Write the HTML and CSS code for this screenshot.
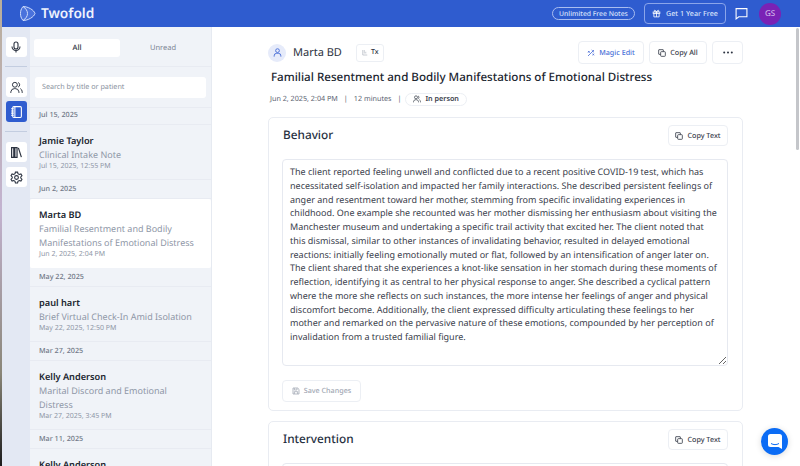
FILE: index.html
```html
<!DOCTYPE html>
<html lang="en">
<head>
    <meta charset="UTF-8">
    <meta name="viewport" content="width=device-width, initial-scale=1.0">
    <title>Twofold</title>
    <link rel="stylesheet" href="styles.css">
</head>
<body>

<div class="window">
    <header class="topbar">
        <div class="brand">
            <svg class="brand-mark" width="16" height="17" viewBox="0 0 16 17" fill="none" stroke="#cfdcfb" stroke-width="1">
                <path d="M3 1.500c5 0 11 3.500 12 7-1 3.500-7 7-12 7C1 13 .5 11 .5 8.500S1 4 3 1.500z" fill="#4a72dc"/>
                <path d="M3 1.500c3 2 4.500 4.500 4.500 7S6 13.500 3 15.500"/>
            </svg>
            <span class="brand-name">Twofold</span>
        </div>
        <div class="topbar-right">
            <span class="pill">Unlimited Free Notes</span>
            <button class="gift-btn">
                <svg width="9" height="9" viewBox="0 0 24 24" fill="none" stroke="#fff" stroke-width="2.200"><rect x="3" y="8" width="18" height="4"/><path d="M5 12v9h14v-9M12 8v13M12 8C10 3 6 2 6 5s3 3 6 3zM12 8c2-5 6-6 6-3s-3 3-6 3z"/></svg>
                Get 1 Year Free
            </button>
            <svg class="chat-icon" width="13" height="13" viewBox="0 0 24 24" fill="none" stroke="#fff" stroke-width="2"><path d="M2 3h20v15H7l-5 4z"/></svg>
            <span class="user-badge">GS</span>
        </div>
    </header>

    <div class="layout">
        <nav class="rail">
            <a class="rail-btn">
                <svg width="12" height="12" viewBox="0 0 24 24" fill="none" stroke="#2b3240" stroke-width="2.200"><rect x="8" y="2" width="8" height="14" rx="4"/><path d="M4 11a8 8 0 0 0 16 0M12 19v4"/></svg>
            </a>
            <div class="rail-line"></div>
            <a class="rail-btn rail-people">
                <svg width="13" height="13" viewBox="0 0 24 24" fill="none" stroke="#2b3240" stroke-width="1.800"><circle cx="9" cy="7" r="4.500"/><path d="M1.500 22v-2a7 7 0 0 1 7-6h1a7 7 0 0 1 7 6v2M15 2.800a4.500 4.500 0 0 1 0 8.400M19 14a7 7 0 0 1 3.500 6v2"/></svg>
            </a>
            <a class="rail-btn rail-active">
                <svg width="13" height="14" viewBox="0 0 24 24" fill="none" stroke="#fff" stroke-width="2"><rect x="5" y="2" width="16" height="20" rx="2"/><path d="M9 2v20M2 6h5M2 10h5M2 14h5M2 18h5"/></svg>
            </a>
            <div class="rail-line"></div>
            <a class="rail-btn">
                <svg width="13" height="13" viewBox="0 0 24 24" fill="none" stroke="#2b3240" stroke-width="2.200"><path d="M3 3h4v18H3zM9 3h4v18H9zM15.500 3.500l5.500 17"/></svg>
            </a>
            <a class="rail-btn rail-gear">
                <svg width="13" height="13" viewBox="0 0 24 24" fill="none" stroke="#2b3240" stroke-width="2"><circle cx="12" cy="12" r="3.500"/><path d="M10 2h4l.7 3 2.400 1.300 3-.9 2 3.400-2.200 2.200v2l2.200 2.200-2 3.400-3-.9-2.400 1.300-.7 3h-4l-.7-3-2.400-1.300-3 .9-2-3.400L4.100 13v-2L1.900 8.800l2-3.400 3 .9L9.300 5z"/></svg>
            </a>
        </nav>

        <aside class="notes">
            <div class="tabs">
                <span class="tab tab-on">All</span>
                <span class="tab">Unread</span>
            </div>
            <div class="search-wrap">
                <div class="search">Search by title or patient</div>
            </div>

            <div class="day">Jul 15, 2025</div>
            <div class="note">
                <div class="note-name">Jamie Taylor</div>
                <div class="note-title">Clinical Intake Note</div>
                <div class="note-time">Jul 15, 2025, 12:55 PM</div>
            </div>

            <div class="day">Jun 2, 2025</div>
            <div class="note note-on">
                <div class="note-name">Marta BD</div>
                <div class="note-title">Familial Resentment and Bodily Manifestations of Emotional Distress</div>
                <div class="note-time">Jun 2, 2025, 2:04 PM</div>
            </div>

            <div class="day">May 22, 2025</div>
            <div class="note">
                <div class="note-name">paul hart</div>
                <div class="note-title">Brief Virtual Check-In Amid Isolation</div>
                <div class="note-time">May 22, 2025, 12:50 PM</div>
            </div>

            <div class="day">Mar 27, 2025</div>
            <div class="note">
                <div class="note-name">Kelly Anderson</div>
                <div class="note-title">Marital Discord and Emotional Distress</div>
                <div class="note-time">Mar 27, 2025, 3:45 PM</div>
            </div>

            <div class="day">Mar 11, 2025</div>
            <div class="note">
                <div class="note-name">Kelly Anderson</div>
            </div>
        </aside>

        <main class="content">
            <div class="patient-row">
                <span class="patient-icon">
                    <svg width="9" height="9" viewBox="0 0 24 24" fill="none" stroke="#4a6fd8" stroke-width="2.500"><circle cx="12" cy="7" r="5"/><path d="M3 23v-2a7 7 0 0 1 7-7h4a7 7 0 0 1 7 7v2"/></svg>
                </span>
                <span class="patient-name">Marta BD</span>
                <span class="tx-tag">
                    <svg width="6" height="7" viewBox="0 0 24 24" fill="none" stroke="#a7adb8" stroke-width="2.500"><path d="M3 2v20h18M9 2v14M15 9v7"/></svg>
                    Tx
                </span>
                <div class="actions">
                    <button class="btn btn-magic">
                        <svg width="8" height="8" viewBox="0 0 24 24" fill="none" stroke="#4a6fd8" stroke-width="2.500"><path d="M3 21L21 3M14 3l7 7M3 6l5 5M8 6l-5 5M17 14l4 5M21 14l-4 5"/></svg>
                        Magic Edit
                    </button>
                    <button class="btn btn-all">
                        <svg class="copy" width="8" height="8" viewBox="0 0 24 24" fill="none" stroke="#3a404c" stroke-width="2.500"><rect x="8" y="8" width="14" height="14" rx="2"/><path d="M16 8V3a1 1 0 0 0-1-1H3a1 1 0 0 0-1 1v12a1 1 0 0 0 1 1h5"/></svg>
                        Copy All
                    </button>
                    <button class="btn btn-more">
                        <svg width="10" height="3" viewBox="0 0 10 3" fill="#2b3240"><circle cx="1.200" cy="1.500" r="1"/><circle cx="5" cy="1.500" r="1"/><circle cx="8.800" cy="1.500" r="1"/></svg>
                    </button>
                </div>
            </div>

            <h1 class="note-heading">Familial Resentment and Bodily Manifestations of Emotional Distress</h1>

            <div class="meta">
                <span>Jun 2, 2025, 2:04 PM</span>
                <span class="sep">|</span>
                <span>12 minutes</span>
                <span class="sep">|</span>
                <span class="visit-tag">
                    <svg width="8" height="8" viewBox="0 0 24 24" fill="none" stroke="#3a404c" stroke-width="2.200"><circle cx="9" cy="7" r="4.500"/><path d="M1.500 22v-2a7 7 0 0 1 7-6h1a7 7 0 0 1 7 6v2M15 2.800a4.500 4.500 0 0 1 0 8.400M19 14a7 7 0 0 1 3.500 6v2"/></svg>
                    In person
                </span>
            </div>

            <section class="card">
                <div class="card-head">
                    <h2>Behavior</h2>
                    <button class="btn btn-copy">
                        <svg width="8" height="8" viewBox="0 0 24 24" fill="none" stroke="#3a404c" stroke-width="2.500"><rect x="8" y="8" width="14" height="14" rx="2"/><path d="M16 8V3a1 1 0 0 0-1-1H3a1 1 0 0 0-1 1v12a1 1 0 0 0 1 1h5"/></svg>
                        Copy Text
                    </button>
                </div>
                <textarea class="note-text" spellcheck="false">The client reported feeling unwell and conflicted due to a recent positive COVID-19 test, which has necessitated self-isolation and impacted her family interactions. She described persistent feelings of anger and resentment toward her mother, stemming from specific invalidating experiences in childhood. One example she recounted was her mother dismissing her enthusiasm about visiting the Manchester museum and undertaking a specific trail activity that excited her. The client noted that this dismissal, similar to other instances of invalidating behavior, resulted in delayed emotional reactions: initially feeling emotionally muted or flat, followed by an intensification of anger later on. The client shared that she experiences a knot-like sensation in her stomach during these moments of reflection, identifying it as central to her physical response to anger. She described a cyclical pattern where the more she reflects on such instances, the more intense her feelings of anger and physical discomfort become. Additionally, the client expressed difficulty articulating these feelings to her mother and remarked on the pervasive nature of these emotions, compounded by her perception of invalidation from a trusted familial figure.</textarea>
                <button class="btn btn-save">
                    <svg width="8" height="8" viewBox="0 0 24 24" fill="none" stroke="#a7adb8" stroke-width="2.500"><path d="M3 3h14l4 4v14H3zM7 3v6h8V3M7 21v-7h10v7"/></svg>
                    Save Changes
                </button>
            </section>

            <section class="card">
                <div class="card-head">
                    <h2>Intervention</h2>
                    <button class="btn btn-copy">
                        <svg width="8" height="8" viewBox="0 0 24 24" fill="none" stroke="#3a404c" stroke-width="2.500"><rect x="8" y="8" width="14" height="14" rx="2"/><path d="M16 8V3a1 1 0 0 0-1-1H3a1 1 0 0 0-1 1v12a1 1 0 0 0 1 1h5"/></svg>
                        Copy Text
                    </button>
                </div>
                <div class="note-text note-text-next"></div>
            </section>

            <div class="scroll-thumb"></div>
        </main>
    </div>

    <button class="chat-fab" aria-label="Chat">
        <svg width="14" height="15" viewBox="0 0 14 15"><path d="M2.500 0h9A2.500 2.500 0 0 1 14 2.500V15l-3.500-2h-8A2.500 2.500 0 0 1 0 10.500v-8A2.500 2.500 0 0 1 2.500 0z" fill="#fff"/><path d="M3 9.500c2.500 1.500 5.500 1.500 8 0" fill="none" stroke="#0b6cf5" stroke-width="1"/></svg>
    </button>
</div>

</body>
</html>
```

FILE: styles.css
```css
* {
    box-sizing: border-box;
    text-rendering: geometricPrecision;
}

html,
body {
    height: 100%;
    margin: 0;
    overflow: hidden;
}

body {
    font-family: "Noto Sans", "Open Sans", sans-serif;
    color: #2b3240;
    padding-left: 2px;
    background: linear-gradient(#b9ae9a, #c3b3d0 45%, #8a8678 80%, #1c1c1c);
}

button {
    font-family: inherit;
    cursor: pointer;
}

.window {
    position: relative;
    height: 100%;
    display: flex;
    flex-direction: column;
    background: #fff;
}

/* top bar */
.topbar {
    height: 27px;
    flex: none;
    display: flex;
    align-items: center;
    justify-content: space-between;
    padding: 0 19px 0 18px;
    background-color: #2f5ccf;
    color: #fff;
}

.brand {
    display: flex;
    align-items: center;
    gap: 5px;
}

.brand-name {
    font-size: 13.700px;
    font-weight: 600;
    color: #eef2fd;
}

.topbar-right {
    display: flex;
    align-items: center;
}

.pill {
    width: 83px;
    font-size: 6.800px;
    font-weight: 500;
    height: 13px;
    line-height: 11px;
    text-align: center;
    border: 1px solid #a9bdf0;
    border-radius: 7px;
    color: #dbe4fb;
    margin-right: 9px;
}

.gift-btn {
    display: flex;
    align-items: center;
    gap: 5px;
    width: 82px;
    height: 21px;
    padding: 0 0 0 7px;
    font-size: 7.200px;
    font-weight: 500;
    white-space: nowrap;
    color: #dbe4fb;
    background: none;
    border: 1px solid #8ba5ea;
    border-radius: 4px;
    margin-right: 9px;
}

.chat-icon {
    margin-right: 11px;
}

.user-badge {
    width: 22px;
    height: 22px;
    border-radius: 50%;
    background-color: #7a22b5;
    color: #d9c3ee;
    font-size: 8px;
    line-height: 22px;
    text-align: center;
}

.layout {
    flex: 1;
    display: flex;
    min-height: 0;
}

/* icon rail */
.rail {
    width: 28px;
    flex: none;
    display: flex;
    flex-direction: column;
    align-items: center;
    padding-top: 10px;
    background-color: #e3e8f3;
}

.rail-btn {
    width: 21px;
    height: 20px;
    display: flex;
    align-items: center;
    justify-content: center;
    background-color: #fff;
    border-radius: 3px;
}

.rail-line {
    width: 22px;
    height: 1px;
    margin: 9px 0 10px;
    background-color: #c3cde0;
}

.rail-people {
    margin-bottom: 4px;
}

.rail-active {
    height: 21px;
    background-color: #2f5ccf;
}

.rail-gear {
    margin-top: 5px;
}

/* note list */
.notes {
    width: 182px;
    flex: none;
    overflow: hidden;
    background-color: #f0f3f8;
    border-right: 1px solid #e6eaf1;
}

.tabs {
    display: flex;
    padding: 12px 4px 9px;
    border-bottom: 1px solid #e8ebf2;
    font-size: 7.500px;
}

.tab {
    width: 86px;
    height: 18px;
    line-height: 18px;
    text-align: center;
    color: #7c8493;
}

.tab-on {
    background-color: #fff;
    color: #2b3240;
    font-weight: 500;
    border-radius: 3px;
}

.search-wrap {
    padding: 10px 5px 9px;
    border-bottom: 1px solid #e8ebf2;
}

.search {
    height: 21px;
    line-height: 21px;
    padding-left: 7px;
    background-color: #fff;
    border-radius: 3px;
    font-size: 7.200px;
    color: #8a92a0;
}

.day {
    height: 19px;
    line-height: 18px;
    padding-left: 9px;
    font-size: 7.200px;
    font-weight: 500;
    color: #6f7786;
    border-bottom: 1px solid #e8ebf2;
}

.search-wrap + .day {
    height: 17px;
    line-height: 15px;
}

.note {
    padding: 9px 9px 7px;
    border-bottom: 1px solid #e8ebf2;
}

.note-on {
    background-color: #fff;
    border-bottom-color: #fff;
    border-radius: 2px;
}

.note-name {
    font-size: 9.200px;
    line-height: 14px;
    font-weight: 600;
    color: #20252f;
}

.note-title {
    font-size: 9px;
    line-height: 14px;
    color: #8f97a7;
}

.note-time {
    font-size: 7px;
    line-height: 10px;
    color: #8f97a7;
}

/* main column */
.content {
    position: relative;
    flex: 1;
    min-width: 0;
    overflow: hidden;
    padding: 14px 57px 0 56px;
}

.patient-row {
    display: flex;
    align-items: center;
    height: 23px;
}

.patient-icon {
    width: 18px;
    height: 18px;
    display: flex;
    align-items: center;
    justify-content: center;
    border-radius: 50%;
    background-color: #e6ebfa;
    margin-right: 7px;
}

.patient-name {
    font-size: 11px;
    color: #2b3240;
    margin-right: 14px;
}

.tx-tag {
    display: flex;
    align-items: center;
    gap: 3px;
    height: 18px;
    padding: 0 5px;
    font-size: 7px;
    font-weight: 500;
    border: 1px solid #eceff4;
    border-radius: 3px;
}

.actions {
    margin-left: auto;
    display: flex;
    gap: 5px;
}

.btn {
    display: flex;
    align-items: center;
    justify-content: center;
    gap: 4px;
    height: 23px;
    padding: 0;
    font-size: 7.200px;
    font-weight: 500;
    white-space: nowrap;
    color: #3a404c;
    background-color: #fff;
    border: 1px solid #eceff4;
    border-radius: 4px;
}

.btn-magic {
    color: #4a6fd8;
    width: 66px;
}

.btn-all {
    width: 58px;
}

.btn-more {
    width: 31px;
}

.btn-copy {
    width: 60px;
    height: 21px;
}

.btn-save {
    width: 79px;
    height: 22px;
    color: #a1a7b3;
    margin-top: 14px;
}

.note-heading {
    margin: 4px 0 0 3px;
    font-size: 11.600px;
    line-height: 20px;
    font-weight: 500;
    white-space: nowrap;
    color: #20252f;
}

.meta {
    display: flex;
    align-items: center;
    height: 14px;
    margin-top: 4px;
    margin-left: 2px;
    font-size: 7.200px;
    color: #5b6371;
}

.sep {
    margin: 0 6px;
}

.visit-tag {
    display: flex;
    align-items: center;
    gap: 4px;
    height: 13px;
    margin-left: -2px;
    padding: 0 7px;
    font-weight: 600;
    color: #3a404c;
    border: 1px solid #eceff4;
    border-radius: 7px;
}

/* note sections */
.card {
    margin-top: 11px;
    padding: 7px 14px 8px 13px;
    background-color: #fff;
    border: 1px solid #e9ecf2;
    border-radius: 5px;
}

.card + .card {
    margin-top: 10px;
}

.card-head {
    display: flex;
    align-items: center;
    justify-content: space-between;
    height: 21px;
    margin-bottom: 13px;
}

.card-head h2 {
    margin: -2px 0 0 1px;
    font-size: 11.800px;
    font-weight: 500;
    color: #27303f;
}

.note-text {
    display: block;
    width: 100%;
    height: 207px;
    padding: 5px 7px;
    font-family: inherit;
    font-size: 9px;
    line-height: 13.750px;
    color: #3a404c;
    border: 1px solid #e6e9f0;
    border-radius: 4px;
    overflow: hidden;
    outline: none;
}

.note-text-next {
    height: 40px;
}

.scroll-thumb {
    position: absolute;
    top: 1px;
    right: 1px;
    width: 3px;
    height: 122px;
    border-radius: 2px;
    background-color: #c4c6ca;
}

.chat-fab {
    position: absolute;
    right: 12px;
    bottom: 11px;
    width: 27px;
    height: 27px;
    display: flex;
    align-items: center;
    justify-content: center;
    padding: 0;
    background-color: #0b6cf5;
    border: 0;
    border-radius: 50%;
    box-shadow: 0 1px 6px rgba(0, 0, 0, 0.15);
}
```
